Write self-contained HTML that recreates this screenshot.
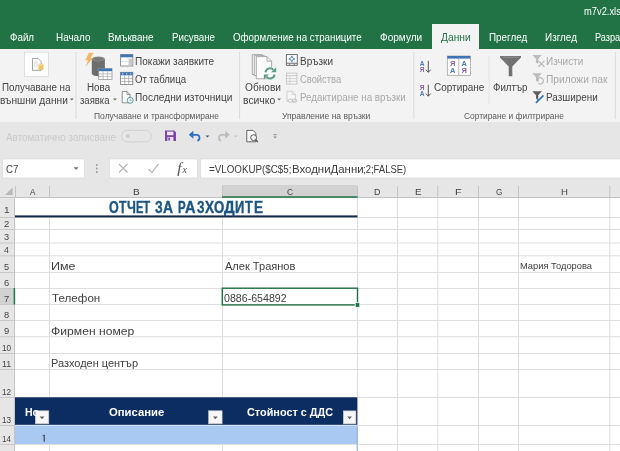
<!DOCTYPE html>
<html><head><meta charset="utf-8">
<style>
*{margin:0;padding:0;box-sizing:border-box}
html,body{width:620px;height:451px;overflow:hidden;background:#fff}
body{font-family:"Liberation Sans",sans-serif;position:relative;color:#333}
.a{position:absolute;white-space:nowrap}
#green{left:0;top:0;width:620px;height:48.8px;background:#217346}
#acttab{left:432.4px;top:24.3px;width:46.7px;height:25px;background:#f3f3f3}
#ribbon{left:0;top:48.8px;width:620px;height:73px;background:#f3f3f3}
#qat{left:0;top:121.5px;width:620px;height:64px;background:#e6e6e6}
#grid{left:0;top:185px;width:620px;height:266px;background:#fff}
#svg{left:0;top:0;will-change:transform}
</style></head><body>
<div class="a" id="green"></div>
<div class="a" id="acttab"></div>
<div class="a" id="ribbon"></div>
<div class="a" id="qat"></div>
<div class="a" id="grid"></div>
<svg class="a" id="svg" width="620" height="451" viewBox="0 0 620 451">
<line x1="76" y1="52" x2="76" y2="119" stroke="#dadada" stroke-width="1" />
<line x1="239.6" y1="52" x2="239.6" y2="119" stroke="#dadada" stroke-width="1" />
<line x1="413.8" y1="52" x2="413.8" y2="119" stroke="#dadada" stroke-width="1" />
<line x1="615.3" y1="52" x2="615.3" y2="119" stroke="#dadada" stroke-width="1" />
<line x1="489" y1="56" x2="489" y2="104" stroke="#e4e4e4" stroke-width="1" />
<rect x="0" y="185" width="620" height="12" fill="#e6e6e6" />
<rect x="0" y="197" width="15" height="254" fill="#e6e6e6" />
<rect x="222" y="185" width="135" height="12" fill="#d2d2d2" />
<rect x="0" y="288" width="15" height="16" fill="#d2d2d2" />
<line x1="15.5" y1="186" x2="15.5" y2="197" stroke="#c4c4c4" stroke-width="1" />
<line x1="49.5" y1="186" x2="49.5" y2="197" stroke="#c4c4c4" stroke-width="1" />
<line x1="222.5" y1="186" x2="222.5" y2="197" stroke="#c4c4c4" stroke-width="1" />
<line x1="357.5" y1="186" x2="357.5" y2="197" stroke="#c4c4c4" stroke-width="1" />
<line x1="397.5" y1="186" x2="397.5" y2="197" stroke="#c4c4c4" stroke-width="1" />
<line x1="437.8" y1="186" x2="437.8" y2="197" stroke="#c4c4c4" stroke-width="1" />
<line x1="478.5" y1="186" x2="478.5" y2="197" stroke="#c4c4c4" stroke-width="1" />
<line x1="518.5" y1="186" x2="518.5" y2="197" stroke="#c4c4c4" stroke-width="1" />
<line x1="609.8" y1="186" x2="609.8" y2="197" stroke="#c4c4c4" stroke-width="1" />
<line x1="0" y1="217.5" x2="15" y2="217.5" stroke="#c8c8c8" stroke-width="1" />
<line x1="0" y1="229.5" x2="15" y2="229.5" stroke="#c8c8c8" stroke-width="1" />
<line x1="0" y1="243.0" x2="15" y2="243.0" stroke="#c8c8c8" stroke-width="1" />
<line x1="0" y1="255.8" x2="15" y2="255.8" stroke="#c8c8c8" stroke-width="1" />
<line x1="0" y1="272.5" x2="15" y2="272.5" stroke="#c8c8c8" stroke-width="1" />
<line x1="0" y1="288.5" x2="15" y2="288.5" stroke="#c8c8c8" stroke-width="1" />
<line x1="0" y1="304.5" x2="15" y2="304.5" stroke="#c8c8c8" stroke-width="1" />
<line x1="0" y1="320.5" x2="15" y2="320.5" stroke="#c8c8c8" stroke-width="1" />
<line x1="0" y1="336.7" x2="15" y2="336.7" stroke="#c8c8c8" stroke-width="1" />
<line x1="0" y1="353.5" x2="15" y2="353.5" stroke="#c8c8c8" stroke-width="1" />
<line x1="0" y1="369.5" x2="15" y2="369.5" stroke="#c8c8c8" stroke-width="1" />
<line x1="0" y1="397.5" x2="15" y2="397.5" stroke="#c8c8c8" stroke-width="1" />
<line x1="0" y1="425.5" x2="15" y2="425.5" stroke="#c8c8c8" stroke-width="1" />
<line x1="0" y1="444.5" x2="15" y2="444.5" stroke="#c8c8c8" stroke-width="1" />
<line x1="0" y1="197.5" x2="620" y2="197.5" stroke="#c4c4c4" stroke-width="1" />
<line x1="14.5" y1="197" x2="14.5" y2="451" stroke="#c4c4c4" stroke-width="1" />
<line x1="222" y1="197" x2="357.5" y2="197" stroke="#217346" stroke-width="1.5" />
<line x1="14.4" y1="288" x2="14.4" y2="304.5" stroke="#217346" stroke-width="1.5" />
<path d="M12.5 187.5 L12.5 195 L5 195 Z" fill="#b8b8b8"/>
<line x1="15" y1="217.5" x2="620" y2="217.5" stroke="#dedede" stroke-width="1" />
<line x1="15" y1="229.5" x2="620" y2="229.5" stroke="#dedede" stroke-width="1" />
<line x1="15" y1="243.0" x2="620" y2="243.0" stroke="#dedede" stroke-width="1" />
<line x1="15" y1="255.8" x2="620" y2="255.8" stroke="#dedede" stroke-width="1" />
<line x1="15" y1="272.5" x2="620" y2="272.5" stroke="#dedede" stroke-width="1" />
<line x1="15" y1="288.5" x2="620" y2="288.5" stroke="#dedede" stroke-width="1" />
<line x1="15" y1="304.5" x2="620" y2="304.5" stroke="#dedede" stroke-width="1" />
<line x1="15" y1="320.5" x2="620" y2="320.5" stroke="#dedede" stroke-width="1" />
<line x1="15" y1="336.7" x2="620" y2="336.7" stroke="#dedede" stroke-width="1" />
<line x1="15" y1="353.5" x2="620" y2="353.5" stroke="#dedede" stroke-width="1" />
<line x1="15" y1="369.5" x2="620" y2="369.5" stroke="#dedede" stroke-width="1" />
<line x1="15" y1="397.5" x2="620" y2="397.5" stroke="#dedede" stroke-width="1" />
<line x1="15" y1="425.5" x2="620" y2="425.5" stroke="#dedede" stroke-width="1" />
<line x1="15" y1="444.5" x2="620" y2="444.5" stroke="#dedede" stroke-width="1" />
<line x1="49.5" y1="198" x2="49.5" y2="451" stroke="#dedede" stroke-width="1" />
<line x1="222.5" y1="198" x2="222.5" y2="451" stroke="#dedede" stroke-width="1" />
<line x1="357.5" y1="198" x2="357.5" y2="451" stroke="#dedede" stroke-width="1" />
<line x1="397.5" y1="198" x2="397.5" y2="451" stroke="#dedede" stroke-width="1" />
<line x1="437.8" y1="198" x2="437.8" y2="451" stroke="#dedede" stroke-width="1" />
<line x1="478.5" y1="198" x2="478.5" y2="451" stroke="#dedede" stroke-width="1" />
<line x1="518.5" y1="198" x2="518.5" y2="451" stroke="#dedede" stroke-width="1" />
<line x1="609.8" y1="198" x2="609.8" y2="451" stroke="#dedede" stroke-width="1" />
<rect x="15.5" y="198" width="341" height="18" fill="#fff" />
<rect x="15" y="215.4" width="342.5" height="2" fill="#13294b" />
<rect x="15" y="397.3" width="342.3" height="27.6" fill="#0c2d62" />
<rect x="15" y="424.9" width="342.3" height="0.8" fill="#eef3fb" />
<rect x="15" y="425.7" width="342.3" height="18.3" fill="#a9c9f3" />
<line x1="357.2" y1="425.7" x2="357.2" y2="451" stroke="#8fb0de" stroke-width="1" />
<rect x="35.3" y="410.8" width="13.5" height="13" fill="#f6f6f6" stroke="#c9c9c9" stroke-width="0.6" />
<path d="M39.65 416.50 h4.8 l-2.4 2.7z" fill="#606060"/>
<rect x="208.6" y="410.8" width="13.5" height="13" fill="#f6f6f6" stroke="#c9c9c9" stroke-width="0.6" />
<path d="M212.95 416.50 h4.8 l-2.4 2.7z" fill="#606060"/>
<rect x="343.3" y="410.9" width="12.6" height="13" fill="#f6f6f6" stroke="#c9c9c9" stroke-width="0.6" />
<path d="M347.20 416.60 h4.8 l-2.4 2.7z" fill="#606060"/>
<path d="M42.6 435.4 l1.3 -0.6 h0.9 v6.9 h-1.2 v-5.9 l-1 0.4z" fill="#444"/>
<rect x="222.3" y="288.2" width="135.2" height="16.7" fill="none" stroke="#1e7145" stroke-width="1.4" />
<rect x="355.2" y="302.7" width="4.6" height="4.6" fill="#1e7145" stroke="#fff" stroke-width="0.8" />
<rect x="2.3" y="159" width="82.2" height="19" fill="#fff" stroke="#d4d4d4" stroke-width="0.6" />
<path d="M73.6 167.3 h5 l-2.5 2.7z" fill="#777"/>
<circle cx="96.8" cy="165" r="0.9" fill="#9a9a9a"/>
<circle cx="96.8" cy="168.5" r="0.9" fill="#9a9a9a"/>
<circle cx="96.8" cy="172" r="0.9" fill="#9a9a9a"/>
<rect x="109.3" y="159" width="88" height="19" fill="#fff" stroke="#d4d4d4" stroke-width="0.6" />
<rect x="200.8" y="159" width="420" height="19" fill="#fff" stroke="#d4d4d4" stroke-width="0.6" />
<path d="M119 164 l8.5 8.5 M127.5 164 l-8.5 8.5" stroke="#b5b5b5" stroke-width="1.1" fill="none"/>
<path d="M148.5 169 l3.4 3.6 l6.6 -8.8" stroke="#b5b5b5" stroke-width="1.2" fill="none"/>
<text x="177.3" y="172.6" font-family="Liberation Serif" font-style="italic" font-size="15.5" fill="#505050">f</text>
<text x="182.6" y="173" font-family="Liberation Serif" font-style="italic" font-size="10" fill="#505050">x</text>
<rect x="121.5" y="130.3" width="29.8" height="11.5" rx="5.75" fill="none" stroke="#d0d0d0" stroke-width="1"/>
<circle cx="127.8" cy="136" r="2" fill="#cfcfcf"/>
<path d="M165 130.5 h9.3 l1.7 1.7 v8.9 h-11z" fill="#7d45a6"/>
<rect x="167" y="131.6" width="6.4" height="3.6" fill="#e9e4ee" />
<rect x="167.4" y="137" width="6" height="4.1" fill="#e9e4ee" />
<rect x="168.3" y="137.7" width="1.8" height="2.7" fill="#7d45a6" />
<path d="M190.5 134.8 h6.2 a3 3 0 0 1 0.6 5.9" fill="none" stroke="#2f6fc2" stroke-width="1.7"/>
<path d="M188.8 134.8 l4.6 -4 v8z" fill="#2f6fc2"/>
<path d="M205.4 135.5 h4 l-2 2.1z" fill="#555"/>
<path d="M228 134.8 h-6.2 a3 3 0 0 0 -0.6 5.9" fill="none" stroke="#bdbdbd" stroke-width="1.7"/>
<path d="M229.8 134.8 l-4.6 -4 v8z" fill="#bdbdbd"/>
<path d="M233.6 135.5 h4 l-2 2.1z" fill="#c6c6c6"/>
<path d="M246.8 130.4 h6.2 l2.8 2.8 v8.6 h-9z" fill="#fdfdfd" stroke="#555" stroke-width="0.9"/>
<circle cx="253.6" cy="137.6" r="2.9" fill="#f3f3f3" stroke="#555" stroke-width="1"/>
<line x1="255.6" y1="139.7" x2="257.8" y2="142" stroke="#555" stroke-width="1.3" />
<line x1="273.4" y1="134.7" x2="276.8" y2="134.7" stroke="#8a8a8a" stroke-width="0.9" />
<path d="M273.3 136.4 h3.6 l-1.8 2z" fill="#8a8a8a"/>
<rect x="24.4" y="52.1" width="24" height="24.4" fill="#fdfdfd" stroke="#d4d4d4" stroke-width="0.7" />
<path d="M32.5 58.4 h5.6 l3 3 v8.9 h-8.6z" fill="#fff" stroke="#8a8a8a" stroke-width="0.8"/>
<line x1="34" y1="62" x2="38" y2="62" stroke="#bdbdbd" stroke-width="0.6" />
<line x1="34" y1="64" x2="38" y2="64" stroke="#bdbdbd" stroke-width="0.6" />
<line x1="34" y1="66" x2="38" y2="66" stroke="#bdbdbd" stroke-width="0.6" />
<path d="M38.5 64.4 v4.8 a2.5 1 0 0 0 5 0 v-4.8z" fill="#efc564"/>
<ellipse cx="41" cy="64.4" rx="2.5" ry="1" fill="#f7dc95"/>
<path d="M69.9 98.4 h3.8 l-1.9 2.1z" fill="#666"/>
<path d="M113 98.4 h3.8 l-1.9 2.1z" fill="#666"/>
<path d="M277.2 98.4 h3.8 l-1.9 2.1z" fill="#666"/>
<path d="M91.8 59 v14.6 a6.55 2.6 0 0 0 13.1 0 v-14.6z" fill="#6e6e6e"/>
<ellipse cx="98.35" cy="59" rx="6.55" ry="2.6" fill="#8d8d8d"/>
<ellipse cx="98.35" cy="59" rx="5.2" ry="1.7" fill="#7a7a7a"/>
<path d="M89 52.8 h4.4 l-2.8 5.2 h2.6 l-7.6 8.6 l2.4 -6.4 h-2.8z" fill="#f2b466"/>
<rect x="98.7" y="68.6" width="13.3" height="10.8" fill="#fff" stroke="#8a8a8a" stroke-width="0.7" />
<rect x="98.7" y="68.6" width="13.3" height="2.6" fill="#3f74b5" />
<line x1="98.7" y1="73.9" x2="112" y2="73.9" stroke="#9a9a9a" stroke-width="0.6" />
<line x1="98.7" y1="76.6" x2="112" y2="76.6" stroke="#9a9a9a" stroke-width="0.6" />
<line x1="103.1" y1="71.2" x2="103.1" y2="79.4" stroke="#9a9a9a" stroke-width="0.6" />
<line x1="107.6" y1="71.2" x2="107.6" y2="79.4" stroke="#9a9a9a" stroke-width="0.6" />
<rect x="120.6" y="54.5" width="12.2" height="11.5" fill="#fff" stroke="#7b7b7b" stroke-width="0.8" />
<rect x="120.6" y="54.5" width="12.2" height="2.8" fill="#3f74b5" />
<rect x="128.6" y="58.6" width="3.6" height="6.8" fill="#c9c9c9" />
<line x1="121" y1="61.6" x2="128.4" y2="61.6" stroke="#c2c2c2" stroke-width="0.6" />
<rect x="120.6" y="72.3" width="12.2" height="12.3" fill="#fff" stroke="#7b7b7b" stroke-width="0.8" />
<rect x="120.6" y="72.3" width="12.2" height="3" fill="#3f74b5" />
<circle cx="122.7" cy="73.8" r="0.6" fill="#fff"/>
<circle cx="126.7" cy="73.8" r="0.6" fill="#fff"/>
<circle cx="130.7" cy="73.8" r="0.6" fill="#fff"/>
<line x1="120.6" y1="78.4" x2="132.8" y2="78.4" stroke="#8a8a8a" stroke-width="0.6" />
<line x1="120.6" y1="81.5" x2="132.8" y2="81.5" stroke="#8a8a8a" stroke-width="0.6" />
<line x1="124.7" y1="75.3" x2="124.7" y2="84.6" stroke="#8a8a8a" stroke-width="0.6" />
<line x1="128.7" y1="75.3" x2="128.7" y2="84.6" stroke="#8a8a8a" stroke-width="0.6" />
<path d="M122.2 91.5 h4.8 l3 3 v8.3 h-7.8z" fill="#fcfcfc" stroke="#777" stroke-width="0.8"/>
<path d="M127 91.5 v3 h3" fill="none" stroke="#777" stroke-width="0.7"/>
<circle cx="130.2" cy="100.3" r="3" fill="#f6fbfb" stroke="#4a9096" stroke-width="0.9"/>
<path d="M130.2 98.5 v1.9 h1.5" fill="none" stroke="#4a9096" stroke-width="0.7"/>
<path d="M252.3 54.6 h10 v20 h-10z" fill="#f8f8f8" stroke="#8a8a8a" stroke-width="0.7"/>
<path d="M254.3 55.6 h10 v20 h-10z" fill="#f8f8f8" stroke="#8a8a8a" stroke-width="0.7"/>
<path d="M256.3 56.6 h10.7 l4.6 4.6 v17.5 h-15.3z" fill="#fdfdfd" stroke="#8a8a8a" stroke-width="0.7"/>
<path d="M267 56.6 v4.6 h4.6" fill="none" stroke="#8a8a8a" stroke-width="0.7"/>
<circle cx="270" cy="73.3" r="6.2" fill="#fdfdfd"/>
<path d="M265.4 72.3 a4.7 4.7 0 0 1 8.1 -2.4" fill="none" stroke="#5a9f83" stroke-width="2"/>
<path d="M276.2 67.2 v5 h-5z" fill="#5a9f83"/>
<path d="M274.7 74.5 a4.7 4.7 0 0 1 -8.1 2.4" fill="none" stroke="#5a9f83" stroke-width="2"/>
<path d="M263.9 79.6 v-5 h5z" fill="#5a9f83"/>
<rect x="286.4" y="54.6" width="10.9" height="8.6" fill="#fdfdfd" stroke="#5f5f5f" stroke-width="0.9" />
<path d="M286.4 63.2 v2.2 h10.9 v-2.2" fill="none" stroke="#5f5f5f" stroke-width="0.9"/>
<path d="M289.6 63.4 v1.8 M294.2 63.4 v1.8" stroke="#5f5f5f" stroke-width="0.8"/>
<path d="M291.85 55.9 l0.9 2.1 2.1 0.9 -2.1 0.9 -0.9 2.1 -0.9 -2.1 -2.1 -0.9 2.1 -0.9z" fill="#eef3fb" stroke="#3f74b5" stroke-width="0.8"/>
<rect x="286.5" y="73.1" width="10.4" height="11" fill="#f7f7f7" stroke="#c4c4c4" stroke-width="0.9" />
<line x1="286.5" y1="75.6" x2="296.9" y2="75.6" stroke="#c4c4c4" stroke-width="0.9" />
<line x1="289.8" y1="75.6" x2="289.8" y2="84.1" stroke="#c9c9c9" stroke-width="0.8" />
<line x1="286.5" y1="78.5" x2="296.9" y2="78.5" stroke="#c9c9c9" stroke-width="0.8" />
<line x1="286.5" y1="81.3" x2="296.9" y2="81.3" stroke="#c9c9c9" stroke-width="0.8" />
<path d="M287 91.2 h5.2 l3.2 3.2 v7 h-8.4z" fill="#f7f7f7" stroke="#c6c6c6" stroke-width="0.8"/>
<path d="M292.2 91.2 v3.2 h3.2" fill="none" stroke="#c6c6c6" stroke-width="0.7"/>
<rect x="288.2" y="99.2" width="4.6" height="3" rx="1.5" fill="#f3f3f3" stroke="#bcbcbc" stroke-width="0.9"/>
<rect x="292.2" y="99.2" width="4.6" height="3" rx="1.5" fill="none" stroke="#bcbcbc" stroke-width="0.9"/>
<text x="419.7" y="66.0" font-family="Liberation Sans" font-weight="bold" font-size="6.6" fill="#4a7ab8">А</text>
<text x="419.7" y="72.0" font-family="Liberation Sans" font-weight="bold" font-size="6.6" fill="#9160ad">Я</text>
<line x1="428.3" y1="60.900000000000006" x2="428.3" y2="72.3" stroke="#555" stroke-width="1" />
<path d="M425.9 69.7 l2.4 2.6 l2.4 -2.6" fill="none" stroke="#555" stroke-width="1"/>
<text x="419.7" y="89.89999999999999" font-family="Liberation Sans" font-weight="bold" font-size="6.6" fill="#9160ad">Я</text>
<text x="419.7" y="95.89999999999999" font-family="Liberation Sans" font-weight="bold" font-size="6.6" fill="#4a7ab8">А</text>
<line x1="428.3" y1="84.8" x2="428.3" y2="96.19999999999999" stroke="#555" stroke-width="1" />
<path d="M425.9 93.6 l2.4 2.6 l2.4 -2.6" fill="none" stroke="#555" stroke-width="1"/>
<rect x="447.3" y="56" width="23" height="19.3" fill="#fff" stroke="#9a9a9a" stroke-width="0.7" />
<rect x="447.3" y="56" width="23" height="2.6" fill="#3f74b5" />
<line x1="458.8" y1="58.6" x2="458.8" y2="75.3" stroke="#9a9a9a" stroke-width="0.7" />
<text x="450" y="66.2" font-family="Liberation Sans" font-weight="bold" font-size="7.5" fill="#9160ad">Я</text>
<text x="461.4" y="66.2" font-family="Liberation Sans" font-weight="bold" font-size="7.5" fill="#4a7ab8">А</text>
<text x="450" y="73.2" font-family="Liberation Sans" font-weight="bold" font-size="7.5" fill="#4a7ab8">А</text>
<text x="461.4" y="73.2" font-family="Liberation Sans" font-weight="bold" font-size="7.5" fill="#9160ad">Я</text>
<path d="M500 56 h21 v1.4 l-8.7 9.2 v9.6 h-3.6 v-9.6 l-8.7 -9.2z" fill="#727272"/>
<path d="M502.5 57.2 h16.4" stroke="#999" stroke-width="0.8"/>
<path d="M532.3 55.0 h9.6 l-3.7 4 v5 l-2.2 -1.6 v-3.4z" fill="#bcbcbc"/>
<path d="M538.4 60.9 l6 5.8 M544.4 60.9 l-6 5.8" stroke="#b8b8b8" stroke-width="1.2" fill="none"/>
<path d="M532.3 73.3 h9.6 l-3.7 4 v5 l-2.2 -1.6 v-3.4z" fill="#bcbcbc"/>
<path d="M537 80.6 a3.2 3.2 0 1 1 1.2 2.8" fill="none" stroke="#b8b8b8" stroke-width="1.2"/><path d="M535.6 78.6 h3 v3z" fill="#b8b8b8"/>
<path d="M532.3 91.2 h9.6 l-3.7 4 v5 l-2.2 -1.6 v-3.4z" fill="#5e5e5e"/>
<path d="M535.9 102.8 l7.6 -7.4" stroke="#2f75bd" stroke-width="1.7" fill="none"/>

</svg>
<div id="txt" class="a" style="left:0;top:0;width:620px;height:451px;overflow:hidden;will-change:transform">
<div class="a" style="left:584.28px;top:3.7px;font-size:10.6px;line-height:15px;color:#fff;transform:scaleX(0.881);transform-origin:0 0;">m7v2.xls</div>
<div class="a" style="left:10.06px;top:28.6px;font-size:11.8px;line-height:16px;color:#fff;transform:scaleX(0.830);transform-origin:0 0;">Файл</div>
<div class="a" style="left:55.60px;top:28.6px;font-size:11.8px;line-height:16px;color:#fff;transform:scaleX(0.839);transform-origin:0 0;">Начало</div>
<div class="a" style="left:108.20px;top:28.6px;font-size:11.8px;line-height:16px;color:#fff;transform:scaleX(0.841);transform-origin:0 0;">Вмъкване</div>
<div class="a" style="left:171.71px;top:28.6px;font-size:11.8px;line-height:16px;color:#fff;transform:scaleX(0.826);transform-origin:0 0;">Рисуване</div>
<div class="a" style="left:233.35px;top:28.6px;font-size:11.8px;line-height:16px;color:#fff;transform:scaleX(0.827);transform-origin:0 0;">Оформление на страниците</div>
<div class="a" style="left:380.24px;top:28.6px;font-size:11.8px;line-height:16px;color:#fff;transform:scaleX(0.854);transform-origin:0 0;">Формули</div>
<div class="a" style="left:440.96px;top:28.6px;font-size:11.8px;line-height:16px;color:#217346;transform:scaleX(0.870);transform-origin:0 0;">Данни</div>
<div class="a" style="left:488.51px;top:28.6px;font-size:11.8px;line-height:16px;color:#fff;transform:scaleX(0.834);transform-origin:0 0;">Преглед</div>
<div class="a" style="left:544.70px;top:28.6px;font-size:11.8px;line-height:16px;color:#fff;transform:scaleX(0.841);transform-origin:0 0;">Изглед</div>
<div class="a" style="left:594.76px;top:28.6px;font-size:11.8px;line-height:16px;color:#fff;transform:scaleX(0.777);transform-origin:0 0;">Разра</div>
<div class="a" style="left:2.25px;top:78.8px;font-size:11.7px;line-height:16px;color:#444;transform:scaleX(0.838);transform-origin:0 0;">Получаване на</div>
<div class="a" style="left:-0.30px;top:91.7px;font-size:11.7px;line-height:16px;color:#444;transform:scaleX(0.871);transform-origin:0 0;">външни данни</div>
<div class="a" style="left:86.60px;top:78.8px;font-size:11.7px;line-height:16px;color:#444;transform:scaleX(0.841);transform-origin:0 0;">Нова</div>
<div class="a" style="left:80.20px;top:91.7px;font-size:11.7px;line-height:16px;color:#444;transform:scaleX(0.814);transform-origin:0 0;">заявка</div>
<div class="a" style="left:134.53px;top:52.5px;font-size:11.7px;line-height:16px;color:#444;transform:scaleX(0.859);transform-origin:0 0;">Покажи заявките</div>
<div class="a" style="left:134.85px;top:71.0px;font-size:11.7px;line-height:16px;color:#444;transform:scaleX(0.822);transform-origin:0 0;">От таблица</div>
<div class="a" style="left:134.52px;top:89.2px;font-size:11.7px;line-height:16px;color:#444;transform:scaleX(0.865);transform-origin:0 0;">Последни източници</div>
<div class="a" style="left:244.82px;top:78.8px;font-size:11.7px;line-height:16px;color:#444;transform:scaleX(0.868);transform-origin:0 0;">Обнови</div>
<div class="a" style="left:243.29px;top:91.7px;font-size:11.7px;line-height:16px;color:#444;transform:scaleX(0.887);transform-origin:0 0;">всичко</div>
<div class="a" style="left:300.19px;top:52.5px;font-size:11.7px;line-height:16px;color:#444;transform:scaleX(0.854);transform-origin:0 0;">Връзки</div>
<div class="a" style="left:300.36px;top:71.0px;font-size:11.7px;line-height:16px;color:#a9a9a9;transform:scaleX(0.802);transform-origin:0 0;">Свойства</div>
<div class="a" style="left:300.00px;top:89.2px;font-size:11.7px;line-height:16px;color:#a9a9a9;transform:scaleX(0.837);transform-origin:0 0;">Редактиране на връзки</div>
<div class="a" style="left:433.83px;top:78.8px;font-size:11.7px;line-height:16px;color:#444;transform:scaleX(0.853);transform-origin:0 0;">Сортиране</div>
<div class="a" style="left:493.46px;top:78.8px;font-size:11.7px;line-height:16px;color:#444;transform:scaleX(0.831);transform-origin:0 0;">Филтър</div>
<div class="a" style="left:546.39px;top:52.5px;font-size:11.7px;line-height:16px;color:#a9a9a9;transform:scaleX(0.852);transform-origin:0 0;">Изчисти</div>
<div class="a" style="left:546.41px;top:71.0px;font-size:11.7px;line-height:16px;color:#a9a9a9;transform:scaleX(0.874);transform-origin:0 0;">Приложи пак</div>
<div class="a" style="left:546.39px;top:89.2px;font-size:11.7px;line-height:16px;color:#444;transform:scaleX(0.847);transform-origin:0 0;">Разширени</div>
<div class="a" style="left:94.33px;top:109.0px;font-size:9.5px;line-height:13px;color:#5a5a5a;transform:scaleX(0.893);transform-origin:0 0;">Получаване и трансформиране</div>
<div class="a" style="left:282.28px;top:109.0px;font-size:9.5px;line-height:13px;color:#5a5a5a;transform:scaleX(0.895);transform-origin:0 0;">Управление на връзки</div>
<div class="a" style="left:463.60px;top:109.0px;font-size:9.5px;line-height:13px;color:#5a5a5a;transform:scaleX(0.881);transform-origin:0 0;">Сортиране и филтриране</div>
<div class="a" style="left:5.80px;top:129.5px;font-size:11.2px;line-height:15px;color:#cacaca;transform:scaleX(0.884);transform-origin:0 0;">Автоматично записване</div>
<div class="a" style="left:6.41px;top:161.5px;font-size:11px;line-height:15px;color:#444;transform:scaleX(0.885);transform-origin:0 0;">C7</div>
<div class="a" style="left:209.34px;top:160.8px;font-size:11.8px;line-height:16px;color:#3c3c3c;transform:scaleX(0.830);transform-origin:0 0;">=VLOOKUP($C$5;</div>
<div class="a" style="left:292.08px;top:160.8px;font-size:11.8px;line-height:16px;color:#3c3c3c;transform:scaleX(0.968);transform-origin:0 0;">ВходниДанни</div>
<div class="a" style="left:363.36px;top:160.8px;font-size:11.8px;line-height:16px;color:#3c3c3c;transform:scaleX(0.804);transform-origin:0 0;">;2;FALSE)</div>
<div class="a" style="left:30.30px;top:184.6px;font-size:9.6px;line-height:14px;color:#444;transform:scaleX(0.844);transform-origin:0 0;">A</div>
<div class="a" style="left:132.51px;top:184.6px;font-size:9.6px;line-height:14px;color:#444;transform:scaleX(1.049);transform-origin:0 0;">B</div>
<div class="a" style="left:286.90px;top:184.6px;font-size:9.6px;line-height:14px;color:#444;transform:scaleX(0.878);transform-origin:0 0;">C</div>
<div class="a" style="left:374.40px;top:184.6px;font-size:9.6px;line-height:14px;color:#444;transform:scaleX(0.939);transform-origin:0 0;">D</div>
<div class="a" style="left:414.53px;top:184.6px;font-size:9.6px;line-height:14px;color:#444;transform:scaleX(1.029);transform-origin:0 0;">E</div>
<div class="a" style="left:455.25px;top:184.6px;font-size:9.6px;line-height:14px;color:#444;transform:scaleX(1.137);transform-origin:0 0;">F</div>
<div class="a" style="left:495.61px;top:184.6px;font-size:9.6px;line-height:14px;color:#444;transform:scaleX(0.857);transform-origin:0 0;">G</div>
<div class="a" style="left:560.95px;top:184.6px;font-size:9.6px;line-height:14px;color:#444;transform:scaleX(1.000);transform-origin:0 0;">H</div>
<div class="a" style="left:3.54px;top:203.7px;font-size:9.3px;line-height:13px;color:#444;transform:scaleX(1.086);transform-origin:0 0;">1</div>
<div class="a" style="left:3.84px;top:217.5px;font-size:9.3px;line-height:13px;color:#444;transform:scaleX(1.023);transform-origin:0 0;">2</div>
<div class="a" style="left:3.95px;top:231.0px;font-size:9.3px;line-height:13px;color:#444;transform:scaleX(0.989);transform-origin:0 0;">3</div>
<div class="a" style="left:4.11px;top:243.8px;font-size:9.3px;line-height:13px;color:#444;transform:scaleX(0.936);transform-origin:0 0;">4</div>
<div class="a" style="left:3.95px;top:260.5px;font-size:9.3px;line-height:13px;color:#444;transform:scaleX(0.989);transform-origin:0 0;">5</div>
<div class="a" style="left:3.84px;top:276.5px;font-size:9.3px;line-height:13px;color:#444;transform:scaleX(1.011);transform-origin:0 0;">6</div>
<div class="a" style="left:3.84px;top:292.5px;font-size:9.3px;line-height:13px;color:#444;transform:scaleX(1.023);transform-origin:0 0;">7</div>
<div class="a" style="left:3.90px;top:308.5px;font-size:9.3px;line-height:13px;color:#444;transform:scaleX(1.000);transform-origin:0 0;">8</div>
<div class="a" style="left:3.90px;top:324.7px;font-size:9.3px;line-height:13px;color:#444;transform:scaleX(1.011);transform-origin:0 0;">9</div>
<div class="a" style="left:2.28px;top:341.5px;font-size:9.3px;line-height:13px;color:#444;transform:scaleX(0.880);transform-origin:0 0;">10</div>
<div class="a" style="left:2.23px;top:357.5px;font-size:9.3px;line-height:13px;color:#444;transform:scaleX(0.961);transform-origin:0 0;">11</div>
<div class="a" style="left:2.28px;top:385.5px;font-size:9.3px;line-height:13px;color:#444;transform:scaleX(0.889);transform-origin:0 0;">12</div>
<div class="a" style="left:2.28px;top:413.8px;font-size:9.3px;line-height:13px;color:#444;transform:scaleX(0.884);transform-origin:0 0;">13</div>
<div class="a" style="left:2.29px;top:432.5px;font-size:9.3px;line-height:13px;color:#444;transform:scaleX(0.875);transform-origin:0 0;">14</div>
<div class="a" style="left:108.91px;top:196.5px;font-size:16.2px;line-height:21px;color:#1d567f;transform:scaleX(0.773);transform-origin:0 0;font-weight:bold;-webkit-text-stroke:0.4px #1d567f">О</div>
<div class="a" style="left:118.50px;top:196.5px;font-size:16.2px;line-height:21px;color:#1d567f;transform:scaleX(0.750);transform-origin:0 0;font-weight:bold;-webkit-text-stroke:0.4px #1d567f">Т</div>
<div class="a" style="left:126.61px;top:196.5px;font-size:16.2px;line-height:21px;color:#1d567f;transform:scaleX(0.780);transform-origin:0 0;font-weight:bold;-webkit-text-stroke:0.4px #1d567f">Ч</div>
<div class="a" style="left:135.51px;top:196.5px;font-size:16.2px;line-height:21px;color:#1d567f;transform:scaleX(0.683);transform-origin:0 0;font-weight:bold;-webkit-text-stroke:0.4px #1d567f">Е</div>
<div class="a" style="left:142.70px;top:196.5px;font-size:16.2px;line-height:21px;color:#1d567f;transform:scaleX(0.719);transform-origin:0 0;font-weight:bold;-webkit-text-stroke:0.4px #1d567f">Т</div>
<div class="a" style="left:155.11px;top:196.5px;font-size:16.2px;line-height:21px;color:#1d567f;transform:scaleX(0.758);transform-origin:0 0;font-weight:bold;-webkit-text-stroke:0.4px #1d567f">З</div>
<div class="a" style="left:162.78px;top:196.5px;font-size:16.2px;line-height:21px;color:#1d567f;transform:scaleX(0.853);transform-origin:0 0;font-weight:bold;-webkit-text-stroke:0.4px #1d567f">А</div>
<div class="a" style="left:178.09px;top:196.5px;font-size:16.2px;line-height:21px;color:#1d567f;transform:scaleX(0.705);transform-origin:0 0;font-weight:bold;-webkit-text-stroke:0.4px #1d567f">Р</div>
<div class="a" style="left:185.47px;top:196.5px;font-size:16.2px;line-height:21px;color:#1d567f;transform:scaleX(0.898);transform-origin:0 0;font-weight:bold;-webkit-text-stroke:0.4px #1d567f">А</div>
<div class="a" style="left:196.71px;top:196.5px;font-size:16.2px;line-height:21px;color:#1d567f;transform:scaleX(0.737);transform-origin:0 0;font-weight:bold;-webkit-text-stroke:0.4px #1d567f">З</div>
<div class="a" style="left:205.20px;top:196.5px;font-size:16.2px;line-height:21px;color:#1d567f;transform:scaleX(0.845);transform-origin:0 0;font-weight:bold;-webkit-text-stroke:0.4px #1d567f">Х</div>
<div class="a" style="left:214.39px;top:196.5px;font-size:16.2px;line-height:21px;color:#1d567f;transform:scaleX(0.816);transform-origin:0 0;font-weight:bold;-webkit-text-stroke:0.4px #1d567f">О</div>
<div class="a" style="left:224.30px;top:196.5px;font-size:16.2px;line-height:21px;color:#1d567f;transform:scaleX(0.922);transform-origin:0 0;font-weight:bold;-webkit-text-stroke:0.4px #1d567f">Д</div>
<div class="a" style="left:235.49px;top:196.5px;font-size:16.2px;line-height:21px;color:#1d567f;transform:scaleX(0.801);transform-origin:0 0;font-weight:bold;-webkit-text-stroke:0.4px #1d567f">И</div>
<div class="a" style="left:244.70px;top:196.5px;font-size:16.2px;line-height:21px;color:#1d567f;transform:scaleX(0.780);transform-origin:0 0;font-weight:bold;-webkit-text-stroke:0.4px #1d567f">Т</div>
<div class="a" style="left:254.16px;top:196.5px;font-size:16.2px;line-height:21px;color:#1d567f;transform:scaleX(0.833);transform-origin:0 0;font-weight:bold;-webkit-text-stroke:0.4px #1d567f">Е</div>
<div class="a" style="left:50.97px;top:257.8px;font-size:11.6px;line-height:16px;color:#404040;transform:scaleX(1.079);transform-origin:0 0;">Име</div>
<div class="a" style="left:224.80px;top:257.8px;font-size:11.6px;line-height:16px;color:#404040;transform:scaleX(0.953);transform-origin:0 0;">Алек Траянов</div>
<div class="a" style="left:520.24px;top:259.3px;font-size:9.8px;line-height:14px;color:#404040;transform:scaleX(0.951);transform-origin:0 0;">Мария Тодорова</div>
<div class="a" style="left:51.75px;top:290.3px;font-size:11.6px;line-height:16px;color:#404040;transform:scaleX(1.004);transform-origin:0 0;">Телефон</div>
<div class="a" style="left:224.09px;top:290.4px;font-size:11.6px;line-height:16px;color:#404040;transform:scaleX(0.916);transform-origin:0 0;">0886-654892</div>
<div class="a" style="left:51.32px;top:322.6px;font-size:11.6px;line-height:16px;color:#404040;transform:scaleX(1.048);transform-origin:0 0;">Фирмен номер</div>
<div class="a" style="left:51.10px;top:355.4px;font-size:11.6px;line-height:16px;color:#404040;transform:scaleX(0.946);transform-origin:0 0;">Разходен център</div>
<div class="a" style="left:24.80px;top:404.5px;font-size:10.5px;line-height:15px;color:#fff;transform:scaleX(1.005);transform-origin:0 0;font-weight:bold">Но</div>
<div class="a" style="left:108.57px;top:404.5px;font-size:10.5px;line-height:15px;color:#fff;transform:scaleX(1.076);transform-origin:0 0;font-weight:bold">Описание</div>
<div class="a" style="left:246.59px;top:404.5px;font-size:10.5px;line-height:15px;color:#fff;transform:scaleX(1.035);transform-origin:0 0;font-weight:bold">Стойност с ДДС</div>

</div>
</body></html>
